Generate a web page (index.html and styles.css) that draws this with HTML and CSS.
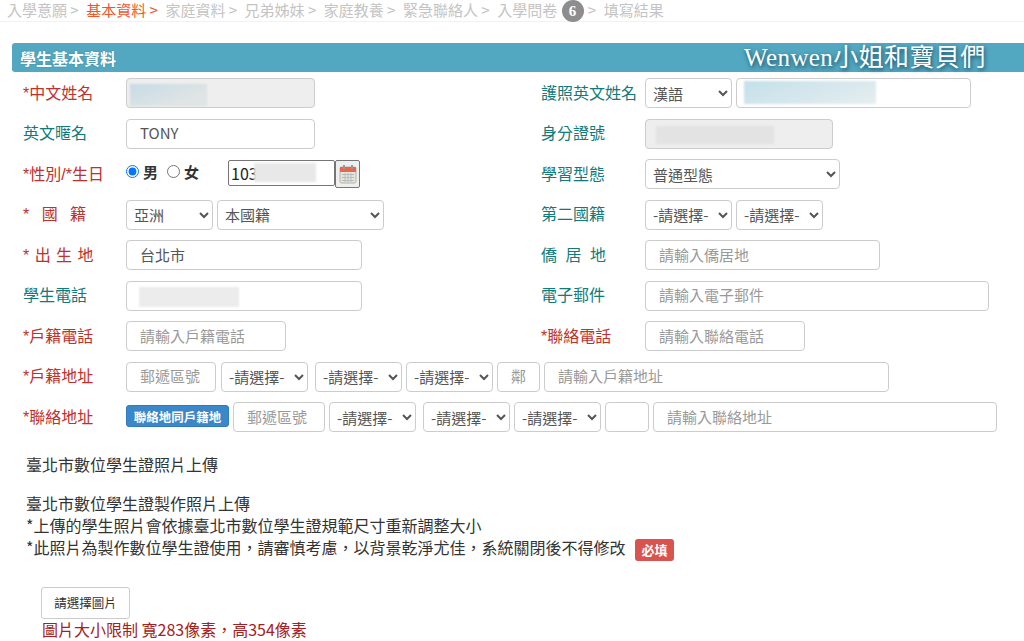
FILE: index.html
```html
<!DOCTYPE html>
<html lang="zh-Hant">
<head>
  <meta charset="UTF-8">
  <meta name="viewport" content="width=device-width, initial-scale=1.0">
  <title>學生基本資料</title>
  <link rel="stylesheet" href="styles.css">
</head>
<body>
  <nav class="steps">
    <span class="step">入學意願 &gt;</span>
    <span class="step current">基本資料 &gt;</span>
    <span class="step">家庭資料 &gt;</span>
    <span class="step">兄弟姊妹 &gt;</span>
    <span class="step">家庭教養 &gt;</span>
    <span class="step">緊急聯絡人 &gt;</span>
    <span class="step">入學問卷 <b class="badge">6</b> &gt;</span>
    <span class="step">填寫結果</span>
  </nav>

  <div class="panel-head">
    <span>學生基本資料</span>
    <span class="watermark">Wenwen小姐和寶貝們</span>
  </div>

  <form class="form">
    <div class="row">
      <div class="half">
        <label class="label req">*中文姓名</label>
        <div class="field w-189 disabled"><span class="blur blur-name"></span></div>
      </div>
      <div class="half">
        <label class="label teal">護照英文姓名</label>
        <select class="select w-87"><option>漢語</option></select>
        <div class="field w-235"><span class="blur blur-passport"></span></div>
      </div>
    </div>

    <div class="row">
      <div class="half">
        <label class="label teal">英文暱名</label>
        <input class="input w-189" value="TONY">
      </div>
      <div class="half">
        <label class="label teal">身分證號</label>
        <div class="field w-188 disabled"><span class="blur blur-id"></span></div>
      </div>
    </div>

    <div class="row">
      <div class="half">
        <label class="label req">*性別/*生日</label>
        <div class="gender">
          <label class="radio"><input type="radio" name="sex" checked>男</label>
          <label class="radio"><input type="radio" name="sex">女</label>
        </div>
        <div class="date">
          <div class="date-input">103<span class="blur blur-date"></span></div>
          <button type="button" class="date-btn">
            <svg width="18" height="20" viewBox="0 0 18 20">
              <rect x="1" y="3" width="16" height="16" rx="1.5" fill="#e8e4da" stroke="#b5b2a8"/>
              <rect x="1" y="3" width="16" height="5" fill="#e8664a"/>
              <rect x="4" y="1" width="2" height="4" fill="#9a9a9a"/>
              <rect x="12" y="1" width="2" height="4" fill="#9a9a9a"/>
              <path d="M3 10.5h12M3 13.5h12M3 16.5h12M6 9v9M9 9v9M12 9v9" stroke="#b3bfc0" stroke-width="1" fill="none"/>
            </svg>
          </button>
        </div>
      </div>
      <div class="half">
        <label class="label teal">學習型態</label>
        <select class="select w-195"><option>普通型態</option></select>
      </div>
    </div>

    <div class="row">
      <div class="half">
        <label class="label req ws-8">* 國 籍</label>
        <select class="select w-87"><option>亞洲</option></select>
        <select class="select w-167"><option>本國籍</option></select>
      </div>
      <div class="half">
        <label class="label teal">第二國籍</label>
        <select class="select w-87"><option>-請選擇-</option></select>
        <select class="select w-87"><option>-請選擇-</option></select>
      </div>
    </div>

    <div class="row">
      <div class="half">
        <label class="label req ws-1">* 出 生 地</label>
        <input class="input w-236" value="台北市">
      </div>
      <div class="half">
        <label class="label teal ws-4">僑 居 地</label>
        <input class="input w-235" placeholder="請輸入僑居地">
      </div>
    </div>

    <div class="row">
      <div class="half">
        <label class="label teal">學生電話</label>
        <div class="field w-236"><span class="blur blur-phone"></span></div>
      </div>
      <div class="half">
        <label class="label teal">電子郵件</label>
        <input class="input w-344" placeholder="請輸入電子郵件">
      </div>
    </div>

    <div class="row">
      <div class="half">
        <label class="label req">*戶籍電話</label>
        <input class="input w-160" placeholder="請輸入戶籍電話">
      </div>
      <div class="half">
        <label class="label req">*聯絡電話</label>
        <input class="input w-160" placeholder="請輸入聯絡電話">
      </div>
    </div>

    <div class="row">
      <label class="label req">*戶籍地址</label>
      <input class="input w-90" placeholder="郵遞區號">
      <select class="select w-87 ml-1"><option>-請選擇-</option></select>
      <select class="select w-87 ml-3"><option>-請選擇-</option></select>
      <select class="select w-87"><option>-請選擇-</option></select>
      <input class="input w-43 center" placeholder="鄰">
      <input class="input w-345" placeholder="請輸入戶籍地址">
    </div>

    <div class="row">
      <label class="label req">*聯絡地址</label>
      <button type="button" class="same-btn">聯絡地同戶籍地</button>
      <input class="input w-92" placeholder="郵遞區號">
      <select class="select w-87"><option>-請選擇-</option></select>
      <select class="select w-87 ml-3"><option>-請選擇-</option></select>
      <select class="select w-87"><option>-請選擇-</option></select>
      <input class="input w-44" value="">
      <input class="input w-344" placeholder="請輸入聯絡地址">
    </div>
  </form>

  <section class="photo">
    <p class="photo-title">臺北市數位學生證照片上傳</p>
    <p>臺北市數位學生證製作照片上傳</p>
    <p>*上傳的學生照片會依據臺北市數位學生證規範尺寸重新調整大小</p>
    <p>*此照片為製作數位學生證使用&#65292;請審慎考慮&#65292;以背景乾淨尤佳&#65292;系統關閉後不得修改<span class="must">必填</span></p>
    <button type="button" class="pick-btn">請選擇圖片</button>
    <p class="limit">圖片大小限制 寬283像素&#65292;高354像素</p>
  </section>
</body>
</html>
```

FILE: styles.css
```css
body {
  margin: 0;
  height: 641px;
  overflow: hidden;
  background-color: #fff;
  color: #333;
  font-family: "Noto Sans CJK TC", "Liberation Sans", sans-serif;
  font-size: 15px;
}

.steps {
  display: flex;
  gap: 7.5px;
  height: 21px;
  padding-left: 7px;
  line-height: 20px;
  color: #c4c4c4;
  border-bottom: 1px solid #f2f2f2;
}
.step {
  white-space: nowrap;
}
.current {
  color: #f0562c;
}
.badge {
  display: inline-block;
  width: 22px;
  height: 22px;
  margin: 0 1px;
  border-radius: 50%;
  background-color: #8d8d8d;
  color: #fff;
  font-family: "Liberation Serif", serif;
  font-size: 15px;
  line-height: 22px;
  text-align: center;
}

.panel-head {
  position: relative;
  display: flex;
  align-items: center;
  height: 29px;
  margin: 21px 0 0 12px;
  padding-left: 8px;
  border-radius: 3px 0 0 3px;
  background-color: #52a7c1;
  color: #fff;
  font-size: 16px;
  font-weight: bold;
  text-shadow: 0 0 2px rgba(0, 0, 0, 0.2);
}
.watermark {
  position: absolute;
  left: 732px;
  top: 0;
  font-family: "Liberation Serif", "Noto Sans CJK TC", serif;
  font-size: 25px;
  font-weight: normal;
  line-height: 29px;
  letter-spacing: 0.4px;
  white-space: nowrap;
  text-shadow: 1px 2px 4px rgba(0, 40, 60, 0.75);
}

.form {
  display: flex;
  flex-direction: column;
  gap: 10.5px;
  margin-top: 6px;
  padding-left: 23px;
}
.row {
  display: flex;
  align-items: center;
  gap: 4px;
  height: 30px;
}
.half {
  display: flex;
  flex: none;
  align-items: center;
  gap: 4px;
  width: 514px;
  height: 30px;
}
.half + .half .label {
  width: 100px;
}

.label {
  flex: none;
  width: 99px;
  margin-top: 1px;
  font-family: "Liberation Sans", "Noto Sans CJK TC", sans-serif;
  font-size: 16px;
  line-height: 20px;
  white-space: nowrap;
}
.req {
  color: #c0302c;
}
.teal {
  color: #117a7a;
}
.ws-1 { word-spacing: 1px; }
.ws-4 { word-spacing: 4px; }
.ws-8 { word-spacing: 8px; }

.input,
.select,
.field {
  box-sizing: border-box;
  flex: none;
  height: 30px;
  border: 1px solid #ccc;
  border-radius: 4px;
  background-color: #fff;
  color: #555;
  font-family: inherit;
  font-size: 15px;
}
.input {
  padding: 0 13px 2px;
}
.input::placeholder {
  color: #999;
  opacity: 1;
}
.input.center {
  text-align: center;
  padding: 0 4px 2px;
}
.select {
  padding: 0 0 0 3px;
}
.field {
  position: relative;
  overflow: hidden;
}
.disabled {
  background-color: #eee;
}

.blur {
  position: absolute;
  filter: blur(1px);
}
.blur-name {
  left: 3px;
  top: 5px;
  width: 77px;
  height: 22px;
  background: linear-gradient(160deg, #c6dce6, #dfe4e5 70%);
}
.blur-passport {
  left: 7px;
  top: 2px;
  width: 132px;
  height: 23px;
  background: linear-gradient(160deg, #c4e0ea, #e6eef0);
}
.blur-id {
  left: 10px;
  top: 6px;
  width: 118px;
  height: 18px;
  background-color: #e3e3e3;
}
.blur-phone {
  left: 12px;
  top: 5px;
  width: 100px;
  height: 20px;
  background-color: #ececec;
}
.blur-date {
  left: 25px;
  top: 2px;
  width: 62px;
  height: 19px;
  background-color: #e8e8e8;
}

.gender {
  display: flex;
  gap: 9px;
  width: 98px;
  margin-bottom: 6px;
}
.radio {
  display: flex;
  align-items: center;
  gap: 4px;
  font-size: 15px;
  font-weight: bold;
  color: #333;
}
.radio input {
  width: 13px;
  height: 13px;
  margin: 0;
}

.date {
  display: flex;
}
.date-input {
  position: relative;
  box-sizing: border-box;
  width: 107px;
  height: 26px;
  padding-left: 2px;
  border: 1px solid #767676;
  border-radius: 2px;
  color: #222;
  font-size: 16px;
  line-height: 24px;
  overflow: hidden;
}
.date-btn {
  display: flex;
  align-items: center;
  justify-content: center;
  box-sizing: border-box;
  width: 25px;
  height: 28px;
  padding: 0;
  border: 1px solid #767676;
  border-radius: 2px;
  background-color: #efefef;
}

.same-btn {
  flex: none;
  box-sizing: border-box;
  width: 103px;
  height: 22px;
  margin-bottom: 2px;
  padding: 0;
  border: 1px solid #2e7bbd;
  border-radius: 3px;
  background-color: #3a87c9;
  color: #fff;
  font-family: inherit;
  font-size: 12.5px;
  font-weight: bold;
  white-space: nowrap;
}

.w-43 { width: 43px; }
.w-44 { width: 44px; }
.w-87 { width: 87px; }
.w-90 { width: 90px; }
.w-92 { width: 92px; }
.w-160 { width: 160px; }
.w-167 { width: 167px; }
.w-188 { width: 188px; }
.w-189 { width: 189px; }
.w-195 { width: 195px; }
.w-235 { width: 235px; }
.w-236 { width: 236px; }
.w-344 { width: 344px; }
.w-345 { width: 345px; }
.ml-1 { margin-left: 1px; }
.ml-3 { margin-left: 3px; }

.photo {
  margin-top: 21px;
  padding-left: 26px;
  font-size: 16px;
  line-height: 22px;
  color: #333;
}
.photo p {
  margin: 0;
}
.photo .photo-title {
  margin-bottom: 17px;
}
.must {
  display: inline-block;
  margin-left: 10px;
  padding: 0 6px;
  border-radius: 3px;
  background-color: #d9534f;
  color: #fff;
  font-size: 13px;
  font-weight: bold;
  line-height: 22px;
  vertical-align: middle;
}
.pick-btn {
  display: block;
  box-sizing: border-box;
  width: 89px;
  height: 32px;
  margin: 26px 0 0 15px;
  padding: 0;
  border: 1px solid #ccc;
  border-radius: 3px;
  background-color: #fff;
  color: #333;
  font-family: inherit;
  font-size: 12.5px;
}
.photo .limit {
  margin: 0 0 0 16px;
  color: #a52020;
  line-height: 20px;
}
```
